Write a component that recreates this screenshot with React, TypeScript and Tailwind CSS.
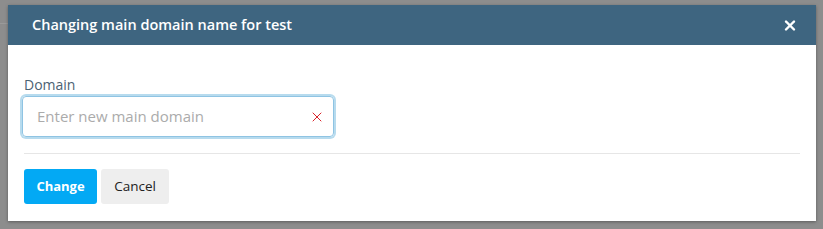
import { X } from "lucide-react";

export default function App() {
  return (
    <div
      className="relative h-[229px] w-[823px] overflow-hidden bg-[#8d8d8d] pt-[5px] pl-[8px]"
      style={{ fontFamily: '"Open Sans", "Noto Sans", sans-serif' }}
    >
      {/* faint page behind the overlay */}
      <div className="absolute left-0 top-[23px] h-px w-[8px] bg-[#9a9a9a]" />

      <div className="relative flex h-[216px] w-[808px] flex-col bg-white shadow-[0_1px_3px_rgba(0,0,0,0.35)]">
        <div className="flex h-[40px] items-center justify-between bg-[#3e6580] pl-[24px] pr-[18px]">
          <h2 className="text-[14.5px] font-semibold leading-none text-white">
            Changing main domain name for test
          </h2>
          <button type="button" className="flex h-[16px] w-[16px] items-center justify-center text-white">
            <X size={17} strokeWidth={3.6} />
          </button>
        </div>

        <div className="px-[16px] pt-[30px]">
          <label className="block text-[14px] leading-[20px] text-[#4b6273]">Domain</label>
          <div className="mt-[1px] -ml-[2px] flex h-[41px] w-[312px] items-center rounded-[4px] border border-[#8fc4e3] pl-[14px] pr-[8px] shadow-[0_0_0_2px_rgba(165,210,234,0.8)]">
            <input
              type="text"
              placeholder="Enter new main domain"
              className="min-w-0 flex-1 bg-transparent text-[15px] text-[#444] outline-none placeholder:text-[#ababab]"
            />
            <X size={16} strokeWidth={1.5} color="#d9232a" />
          </div>

          <div className="mt-[16px] h-px w-[776px] bg-[#e6e6e6]" />

          <div className="mt-[15px] flex gap-[4px]">
            <button
              type="button"
              className="h-[35px] w-[73px] rounded-[3px] bg-[#03a9f4] text-[13px] font-bold text-white"
            >
              Change
            </button>
            <button
              type="button"
              className="h-[35px] w-[68px] rounded-[3px] bg-[#eeeeee] text-[13.5px] text-[#222]"
            >
              Cancel
            </button>
          </div>
        </div>
      </div>
    </div>
  );
}
